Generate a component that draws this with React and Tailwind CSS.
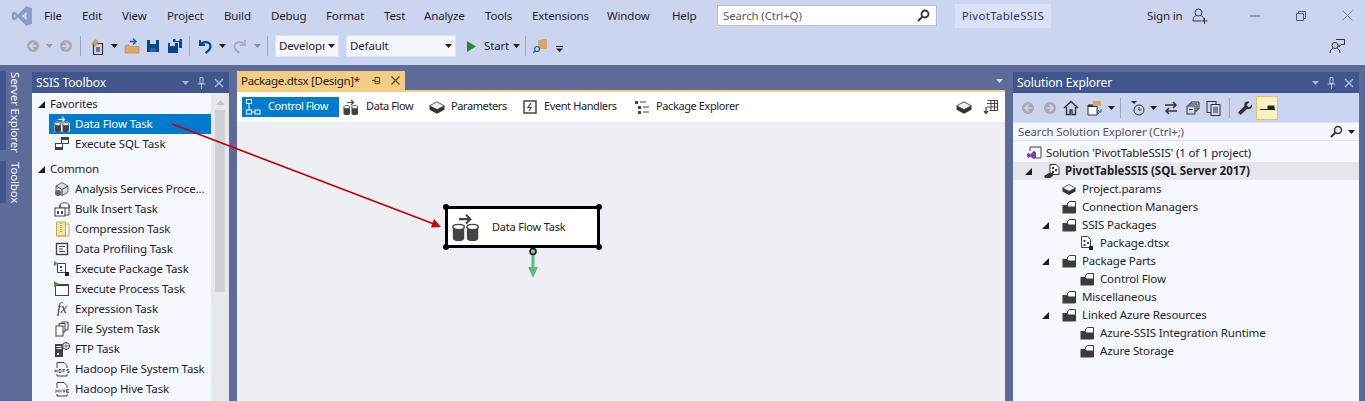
import React from "react";

const D = "#424242";
const Svg = ({ s = 16, vb = "0 0 16 16", children, className = "" }) => (
  <svg width={s} height={s} viewBox={vb} className={"shrink-0 " + className}>{children}</svg>
);
const Caret = ({ c = "#1e1e1e", o = 1 }) => (
  <svg width="7" height="4" viewBox="0 0 7 4" className="shrink-0" opacity={o}><path d="M0 0h7L3.5 4z" fill={c} /></svg>
);
const Tri = () => (
  <svg width="7" height="7" viewBox="0 0 7 7" className="shrink-0"><path d="M7 0v7H0z" fill="#1e1e1e" /></svg>
);
const Sep = () => <div className="w-px h-5 bg-[#9aa7c9] shrink-0" />;

const Circ = ({ dir }) => (
  <Svg s={14} vb="0 0 14 14">
    <circle cx="7" cy="7" r="6" fill="#a8a9ae" />
    <path d={dir === "l" ? "M7.5 3.5 4 7l3.5 3.5M4 7h6.5" : "M6.5 3.5 10 7l-3.5 3.5M10 7H3.5"} stroke="#d5d9e8" strokeWidth="1.6" fill="none" />
  </Svg>
);
const Cyl = ({ x, y, w = 8, h = 9, c = D }) => (
  <g>
    <path d={`M${x} ${y + 1.5}v${h - 2.5}c0 2 ${w} 2 ${w} 0v-${h - 2.5}z`} fill={c} />
    <ellipse cx={x + w / 2} cy={y + 1.5} rx={w / 2} ry="1.5" fill="#fff" stroke={c} strokeWidth="0.8" />
  </g>
);
const DataFlow = ({ s = 16, c = D, halo = false }) => (
  <Svg s={s} vb="0 0 16 16">
    {halo && <path d="M0 7.500C0 5 7.500 5 7.750 7.500 8 5 16 5 16 7.500V15c0 1.500-8 1.500-8.250 0C7.500 16.500 0 16.500 0 15z" fill="#fff" />}
    <path d="M4 3.500h6M8 1l2.500 2.500L8 6" stroke={halo ? "#fff" : c} strokeWidth="1.200" fill="none" />
    <Cyl x={0.5} y={6.5} w={6.5} c={c} />
    <Cyl x={8.5} y={6.5} w={6.5} c={c} />
  </Svg>
);
const ControlFlow = ({ c = "#fff" }) => (
  <Svg>
    <g fill="none" stroke={c} strokeWidth="1">
      <rect x="1.5" y="0.5" width="5" height="4" />
      <rect x="1.5" y="11" width="5" height="4" />
      <rect x="10" y="11" width="5" height="4" />
      <path d="M4 5v6M7 13h3" />
    </g>
  </Svg>
);
const Box3d = ({ s = 14 }) => (
  <Svg s={s} vb="0 0 14 14">
    <path d="M0.5 6 7 2.500 13.500 6v3.500L7 13 .5 9.500z" fill="#333" />
    <path d="M0.5 6 7 2.500 13.500 6 7 9.200z" fill="#eee" stroke="#333" strokeWidth=".6" />
  </Svg>
);
const Folder = () => (
  <Svg s={14} vb="0 0 14 14">
    <path d="M5.500 5V3L7.500 1.500h6V13" fill="#fff" stroke="#3c3c3c" />
    <path d="M.5 5h5l1 1.500h7V13.500H.5z" fill="#3c3c3c" />
  </Svg>
);
const DtsxIcon = () => (
  <Svg s={14} vb="0 0 14 14">
    <path d="M1.500 .5h6l3 3v8h-9z" fill="#fff" stroke="#444" />
    <path d="M3.500 4h2v2h-2zM3.500 8h2v2h-2zM7 6h2v2H7z" fill="#444" />
    <rect x="9" y="10" width="4" height="4" fill="#222" />
  </Svg>
);

function ToolIcon({ k }) {
  const st = { fill: "none", stroke: D, strokeWidth: 1 };
  switch (k) {
    case "df": return <DataFlow halo />;
    case "sql": return (
      <Svg><g {...st}><rect x="7.500" y="1.500" width="7" height="6" /><rect x="1.500" y="7.500" width="7" height="6" fill="#fff" /></g><path d="M2 11h6v3H2z" fill={D} /><path d="M8 2h6v2H8z" fill={D} /></Svg>
    );
    case "as": return (
      <Svg><path d="M2 5 8 1.500 14 5v6l-6 3.500L2 11z" fill="#ddd" stroke="#666" /><path d="M2 5l6 3.500L14 5M8 8.500v6" {...st} /><circle cx="4" cy="12" r="3" fill="#666" /></Svg>
    );
    case "bulk": return (
      <Svg><path d="M6 4v3h9V4c0-3-9-3-9 0z" fill="#fff" stroke={D} /><path d="M6 4v10h9V4" {...st} /><rect x="1" y="7" width="10" height="8" fill="#fff" stroke={D} /><rect x="3" y="10" width="2" height="3" fill={D} /><rect x="7" y="10" width="2" height="3" fill={D} /></Svg>
    );
    case "comp": return (
      <Svg><rect x="2.500" y="1" width="9" height="14" fill="#f4e2a6" stroke="#d9a54a" /><path d="M11.500 3H15v12H4" fill="none" stroke="#d9a54a" /><path d="M7 2v10" stroke="#8a7a3a" strokeDasharray="1 1" /></Svg>
    );
    case "prof": return (
      <Svg><rect x="2.500" y="2.500" width="11" height="11" fill="#fff" stroke={D} strokeWidth="1.400" /><path d="M5 5.500h6M5 8h4M5 10.500h6" stroke={D} /></Svg>
    );
    case "pkg": return (
      <Svg><path d="M3.500 2.500h8v9h-8z" fill="#fff" stroke={D} /><path d="M0 0v5l4-2.500z" fill="#3d9a3d" /><path d="M6 5h2v2H6zM6 9h2v1H6z" fill={D} /><rect x="11" y="11" width="4" height="4" fill="#222" /></Svg>
    );
    case "proc": return (
      <Svg><rect x="1.500" y="3.500" width="13" height="11" fill="#fff" stroke={D} /><path d="M1 3h14v2H1z" fill={D} /><path d="M0 0v6l5-3z" fill="#3d9a3d" /></Svg>
    );
    case "fx": return <span className="w-4 text-center text-[14px] leading-none italic text-[#333] shrink-0 [font-family:'Liberation_Serif',serif]">fx</span>;
    case "fs": return (
      <Svg><rect x="2" y="5" width="7" height="10" fill="#fff" stroke={D} /><path d="M5 5V2.500h6V11H9M8 2.500V1h6v8h-3" {...st} /></Svg>
    );
    case "ftp": return (
      <Svg><rect x="1" y="3" width="8" height="13" fill={D} /><path d="M2.500 5.500h5M2.500 7.500h5" stroke="#fff" /><rect x="3" y="12" width="2" height="2" fill="#fff" /><circle cx="12" cy="5" r="3.500" fill="#fff" stroke={D} /><path d="M8.500 5h7M12 1.500v7" stroke={D} strokeWidth=".7" /></Svg>
    );
    case "hdfs": return (
      <Svg><path d="M3 7V1.500h7l3 3V7M3 13v2h10v-2" {...st} /><path d="M0 8h16v4.500H0z" fill="#f6f8ff" /><path d="M1 8.500v3M3 8.500v3M1 10h2M5 8.500v3h2v-3zM9 8.500v3M9 8.500h2M9 10h2M15 8.500h-2v1.500h2v1.500h-2" stroke={D} strokeWidth=".8" fill="none" /></Svg>
    );
    case "hive": return (
      <Svg><path d="M3 7V1.500h7l3 3V7M3 13v2h10v-2" {...st} /><path d="M2 8.500v3M5 8.500v3M2 10h3M7 8.500v3M9 8.500l1 3 1-3M15 8.500h-2.500v3H15M12.500 10H15" stroke={D} strokeWidth=".8" fill="none" /></Svg>
    );
    default: return null;
  }
}

const menu = [["File", 38], ["Edit", 40], ["View", 45], ["Project", 57], ["Build", 47], ["Debug", 55], ["Format", 58], ["Test", 40], ["Analyze", 61], ["Tools", 47], ["Extensions", 75], ["Window", 65], ["Help", 45]];

const favorites = [["df", "Data Flow Task", true], ["sql", "Execute SQL Task"]];
const common = [
  ["as", "Analysis Services Proce..."], ["bulk", "Bulk Insert Task"], ["comp", "Compression Task"], ["prof", "Data Profiling Task"],
  ["pkg", "Execute Package Task"], ["proc", "Execute Process Task"], ["fx", "Expression Task"], ["fs", "File System Task"],
  ["ftp", "FTP Task"], ["hdfs", "Hadoop File System Task"], ["hive", "Hadoop Hive Task"],
];

const tree = [
  { l: 1, t: 0, n: "Project.params", i: "box" },
  { l: 1, t: 0, n: "Connection Managers" },
  { l: 1, t: 1, n: "SSIS Packages" },
  { l: 2, t: 0, n: "Package.dtsx", i: "dtsx" },
  { l: 1, t: 1, n: "Package Parts" },
  { l: 2, t: 0, n: "Control Flow" },
  { l: 1, t: 0, n: "Miscellaneous" },
  { l: 1, t: 1, n: "Linked Azure Resources" },
  { l: 2, t: 0, n: "Azure-SSIS Integration Runtime" },
  { l: 2, t: 0, n: "Azure Storage" },
];

const PaneTitle = ({ title }) => (
  <div className="h-[21px] bg-[#40568d] flex items-center pl-[4px] pr-[3px] text-white shrink-0">
    <span className="flex-1 text-[12px] leading-none tracking-[-0.1px] pt-[1px]">{title}</span>
    <Caret c="#a9b5d6" />
    <svg width="9" height="12" viewBox="0 0 9 12" className="ml-[8px]"><path d="M3 .5h3v6H3zM.5 7h8M4.500 7v5" stroke="#b9c4e0" fill="none" /></svg>
    <svg width="10" height="10" viewBox="0 0 10 10" className="ml-[8px] mr-[2px]"><path d="M1 1l8 8M9 1 1 9" stroke="#b9c4e0" strokeWidth="1.300" /></svg>
  </div>
);

const VTab = ({ children, className }) => (
  <div className={"bg-[#40568d] w-[6px] shrink-0 relative " + className}>
    <span className="absolute left-[6px] top-0 w-[18px] h-full bg-[#5d6b99] text-[#f0f3ff] leading-[18px] whitespace-nowrap [writing-mode:vertical-rl] pt-[1px]">{children}</span>
  </div>
);

export default function App() {
  return (
    <div className="w-[1365px] h-[401px] overflow-hidden relative flex flex-col bg-[#5d6b99] text-[11.5px] tracking-[-0.15px] text-[#1e1e1e] [font-family:'Noto_Sans',sans-serif]">
      {/* Title bar */}
      <div className="h-[33px] bg-[#ccd5f0] flex items-center shrink-0 pb-[2px]">
        <div className="w-[44px] pl-[12px] shrink-0">
          <svg width="20" height="20" viewBox="0 0 20 20"><path d="M14.500 0 20 2.300v15.400L14.500 20 6 11.500l-3.800 3L0 13.300V6.700l2.200-1.200 3.800 3zm0 5.800L9.800 10l4.700 4.200zM2.200 8v4L4 10z" fill="#8c9ac4" /></svg>
        </div>
        {menu.map(([m, w]) => (
          <span key={m} className="shrink-0" style={{ width: w }}>{m}</span>
        ))}
        <div className="w-[220px] h-[21px] bg-white border border-[#b4bdd8] shrink-0 flex items-center pl-[5px] pr-[6px] text-[#5a5a5a]">
          <span className="flex-1">Search (Ctrl+Q)</span>
          <svg width="13" height="13" viewBox="0 0 13 13"><circle cx="8" cy="5" r="3.500" fill="none" stroke="#333" strokeWidth="1.800" /><path d="M5.500 7.500 1 12" stroke="#333" strokeWidth="2" /></svg>
        </div>
        <div className="ml-[18px] w-[96px] h-[24px] bg-[#dbe1f7] flex items-center justify-center text-[#2a3a6b] tracking-[0.3px] shrink-0">PivotTableSSIS</div>
        <span className="ml-[96px] w-[37px] shrink-0">Sign in</span>
        <svg width="16" height="16" viewBox="0 0 16 16" className="ml-[8px] shrink-0"><circle cx="6.500" cy="4.500" r="3.500" fill="none" stroke="#333" /><path d="M1 13c0-4 2-5 3.500-5.500M12 13c0-4-2-5-3.500-5.500M1 13h8" fill="none" stroke="#333" /><path d="M12.500 10v6M9.500 13h6" stroke="#333" /></svg>
        <svg width="10" height="2" viewBox="0 0 10 2" className="ml-[42px] shrink-0"><path d="M0 1h10" stroke="#4c5a85" /></svg>
        <svg width="10" height="10" viewBox="0 0 10 10" className="ml-[36px] shrink-0"><path d="M.5 2.500h7v7h-7zM2.500 2.500v-2h7v7h-2" fill="none" stroke="#4c5a85" /></svg>
        <svg width="11" height="11" viewBox="0 0 11 11" className="ml-[36px] shrink-0"><path d="M.5.5l10 10M10.500.5l-10 10" stroke="#7384ad" /></svg>
      </div>

      {/* Tool bar */}
      <div className="h-[32px] bg-[#ccd5f0] flex items-center shrink-0 pl-[12px] pb-[6px]">
        <div className="w-[5px] h-[18px] shrink-0 [background-image:radial-gradient(#7a86a8_0.6px,transparent_0.7px)] [background-size:2px_2px]" />
        <div className="w-[3px]" />
        <div className="ml-[6px] flex items-center">
          <Circ dir="l" /><div className="w-[6px]" /><Caret c="#9a9ca3" /><div className="w-[6px]" /><Circ dir="r" />
        </div>
        <div className="w-[7px]" /><Sep /><div className="w-[7px]" />
        <Svg s={18} vb="0 0 18 18"><path d="M5.500 6.500h9v11h-9z" fill="none" stroke="#333" strokeWidth="1.200" /><path d="M6 3.500 8 2l1 2 2-.5L9.500 6 11 8 8.500 7.500 7 10 6 7.500 3 7l2-2z" fill="#d29a45" /><path d="M8 10h4v5H8z" fill="#777" /></Svg>
        <div className="w-[5px]" /><Caret />
        <div className="w-[6px]" />
        <Svg s={16}><path d="M1 7h4l1 1.500h9V15H1z" fill="#dcaa64" stroke="#b8853a" strokeWidth=".6" /><path d="M6 3.500h5M9 .5l3 3-3 3" fill="none" stroke="#1c5fa8" strokeWidth="1.400" /></Svg>
        <div className="w-[6px]" />
        <Svg s={14} vb="0 0 14 14"><path d="M1 1h12v12H1z" fill="#00488e" /><path d="M4 1h6v4H4z" fill="#ccd5f0" /><path d="M4 9h6v4H4z" fill="#fff" opacity=".15" /></Svg>
        <div className="w-[7px]" />
        <Svg s={16}><path d="M1 5h10v10H1z" fill="#00488e" /><path d="M3 5h5v3H3z" fill="#ccd5f0" /><path d="M6 1h9v9h-3V4H6z" fill="#00488e" /><path d="M8.500 1h4v2h-4z" fill="#ccd5f0" /></Svg>
        <div className="w-[6px]" /><Sep /><div className="w-[7px]" />
        <Svg s={16}><path d="M3 2v5h5" fill="none" stroke="#00488e" strokeWidth="2" /><path d="M3.500 6.500C6 3 13 3 13.500 8c.3 3-2 5-5 7" fill="none" stroke="#00488e" strokeWidth="2.200" /></Svg>
        <div className="w-[6px]" /><Caret />
        <div className="w-[6px]" />
        <Svg s={16}><path d="M13 2v5H8" fill="none" stroke="#a5abbb" strokeWidth="1.600" /><path d="M12.500 6.500C10 3 3 3 2.500 8c-.3 3 2 5 5 7" fill="none" stroke="#a5abbb" strokeWidth="1.800" /></Svg>
        <div className="w-[6px]" /><Caret c="#8e919a" />
        <div className="w-[6px]" /><Sep /><div className="w-[7px]" />
        <div className="w-[64px] h-[22px] bg-[#f5f6ff] border border-[#dde3f6] flex items-center pl-[3px] pr-[3px] shrink-0 overflow-hidden">
          <span className="w-[47px] overflow-hidden whitespace-nowrap">Development</span><div className="w-[3px]" /><Caret />
        </div>
        <div className="ml-[7px] w-[110px] h-[22px] bg-[#f5f6ff] border border-[#dde3f6] flex items-center pl-[3px] pr-[3px] shrink-0">
          <span className="flex-1">Default</span><Caret />
        </div>
        <svg width="9" height="11" viewBox="0 0 9 11" className="ml-[11px] shrink-0"><path d="M0 0l9 5.500L0 11z" fill="#2a8a2a" /></svg>
        <span className="ml-[8px] w-[24px] shrink-0">Start</span>
        <div className="ml-[5px]"><Caret /></div>
        <div className="w-[5px]" /><Sep /><div className="w-[7px]" />
        <Svg s={16}><path d="M5 2h3l1-1h5v10H5z" fill="#d8a768" /><circle cx="4" cy="11" r="2.500" fill="#ccd5f0" stroke="#1c5fa8" strokeWidth="1.200" /><path d="M2.300 12.700 0 15" stroke="#1c5fa8" strokeWidth="1.400" /></Svg>
        <svg width="7" height="6" viewBox="0 0 7 6" className="ml-[7px] mt-[6px] shrink-0"><path d="M0 .5h7" stroke="#1e1e1e" /><path d="M0 2.500h7L3.500 6z" fill="#1e1e1e" /></svg>
        <div className="flex-1" />
        <svg width="16" height="16" viewBox="0 0 16 16" className="mr-[20px] shrink-0"><circle cx="6" cy="7.500" r="3" fill="none" stroke="#333" /><path d="M1 15c0-3 2-4.500 3-4.500M11 15c0-3-2-4.500-3-4.500" fill="none" stroke="#333" /><path d="M7 1.500h8.500v5H12L10 9V6.500" fill="none" stroke="#333" /></svg>
      </div>

      {/* Main */}
      <div className="flex-1 flex min-h-0 pt-[6px]">
        {/* Left rail */}
        <div className="w-[32px] shrink-0 flex flex-col">
          <VTab className="h-[79px]">Server Explorer</VTab>
          <div className="h-[11px]" />
          <VTab className="h-[42px]">Toolbox</VTab>
        </div>

        {/* Toolbox pane */}
        <div className="w-[197px] shrink-0 flex flex-col mt-[1px]">
          <PaneTitle title="SSIS Toolbox" />
          <div className="flex-1 flex bg-[#f6f8ff] min-h-0">
            <div className="flex-1 pl-[6px] pt-[1px] overflow-hidden">
              <div className="h-[20px] flex items-center">
                <Tri /><span className="ml-[5px]">Favorites</span>
              </div>
              {favorites.map(([k, n, sel]) => (
                <div key={n} className={"h-[20px] flex items-center ml-[11px] pl-[5px] " + (sel ? "bg-[#007acc] text-white" : "")}>
                  <ToolIcon k={k} /><span className="ml-[5px]">{n}</span>
                </div>
              ))}
              <div className="h-[5px]" />
              <div className="h-[20px] flex items-center">
                <Tri /><span className="ml-[5px]">Common</span>
              </div>
              {common.map(([k, n]) => (
                <div key={n} className="h-[20px] flex items-center ml-[11px] pl-[5px] whitespace-nowrap">
                  <ToolIcon k={k} /><span className="ml-[5px]">{n}</span>
                </div>
              ))}
            </div>
            <div className="w-[18px] shrink-0 bg-[#e8e8ec] flex flex-col items-center">
              <svg width="9" height="5" viewBox="0 0 9 5" className="mt-[7px]"><path d="M4.500 0 9 5H0z" fill="#c2c3c9" /></svg>
              <div className="mt-[5px] w-[10px] h-[182px] bg-[#d0d1d7]" />
            </div>
          </div>
        </div>

        <div className="w-[8px] shrink-0" />

        {/* Document */}
        <div className="w-[768px] shrink-0 flex flex-col">
          <div className="h-[19px] flex items-stretch shrink-0 relative">
            <div className="w-[168px] bg-[#f5cc84] flex items-center pl-[4px] tracking-[-0.3px]">
              <span className="flex-1 whitespace-nowrap">Package.dtsx [Design]*</span>
              <svg width="9" height="9" viewBox="0 0 9 9" className="mr-[10px]"><path d="M0 4.500h3M3 1.500v6h4.500v-6zM3 5.500h4.500" stroke="#5a4a20" fill="none" /></svg>
              <svg width="9" height="9" viewBox="0 0 9 9" className="mr-[5px]"><path d="M.5.5l8 8M8.500.5l-8 8" stroke="#5a4a20" strokeWidth="1.300" /></svg>
            </div>
            <div className="flex-1 flex items-center justify-end pr-[2px]"><Caret c="#d5dcf2" /></div>
          </div>
          <div className="h-[2px] bg-[#f5cc84] shrink-0" />
          <div className="h-[30px] bg-white flex items-center shrink-0 pl-[5px] pr-[6px] text-[11px] tracking-[-0.4px]">
            <div className="w-[97px] h-[20px] bg-[#007acc] text-white flex items-center pl-[3px] mr-[4px] shrink-0 whitespace-nowrap">
              <ControlFlow /><span className="ml-[7px] pb-[2px]">Control Flow</span>
            </div>
            <DataFlow /><span className="ml-[7px] w-[63px] shrink-0 pb-[2px]">Data Flow</span>
            <Box3d s={16} /><span className="ml-[6px] w-[72px] shrink-0 pb-[2px]">Parameters</span>
            <Svg s={14} vb="0 0 14 14"><rect x="1" y="1" width="12" height="12" fill="#fff" stroke="#444" strokeWidth="1.500" /><path d="M8 3 5 7.500h3L6 11" fill="none" stroke="#444" strokeWidth="1.200" /></Svg>
            <span className="ml-[7px] w-[90px] shrink-0 pb-[2px]">Event Handlers</span>
            <Svg s={16}><path d="M1 2h3v3H1zM4 7h3v3H4zM4 12h3v3H4z" fill="#444" /><path d="M6 3h6M9 8h6M9 13h6" stroke="#444" /></Svg>
            <span className="ml-[6px] pb-[2px]">Package Explorer</span>
            <div className="flex-1" />
            <Box3d s={16} />
            <Svg s={16} className="ml-[11px]"><path d="M4.500 1.500h10v10h-8" fill="none" stroke="#444" /><path d="M4 4.500h11M4 8h11M8 1.500v10M11.500 1.500v10" stroke="#444" /><path d="M3 8v6M1 12l2 2.500L5 12" fill="none" stroke="#444" strokeWidth="1.300" /></Svg>
          </div>
          <div className="flex-1 bg-[#eeeff3] relative">
            {/* Task on the canvas */}
            <div className="absolute left-[208px] top-[84px] w-[155px] h-[42px] bg-white border-[3px] border-black rounded-[3px] flex items-center pl-[4px] text-[11px] tracking-[-0.2px]">
              <DataFlow s={28} c="#444" />
              <span className="ml-[12px] text-[#222]">Data Flow Task</span>
            </div>
            {[[206, 82], [359, 82], [206, 122], [359, 122]].map(([x, y]) => (
              <span key={x + "-" + y} className="absolute w-[6px] h-[6px] rounded-full bg-black" style={{ left: x, top: y }} />
            ))}
            <svg width="16" height="34" viewBox="0 0 16 34" className="absolute left-[288px] top-[125px]">
              <path d="M8 7v14" stroke="#5dbb7e" strokeWidth="3" />
              <path d="M3 20h10l-5 11z" fill="#5dbb7e" />
              <circle cx="8" cy="4.500" r="3" fill="#7fc596" stroke="#111" strokeWidth="1.500" />
            </svg>
          </div>
        </div>

        <div className="w-[8px] shrink-0" />

        {/* Solution explorer */}
        <div className="w-[346px] shrink-0 flex flex-col mt-[1px]">
          <PaneTitle title="Solution Explorer" />
          <div className="h-[29px] bg-[#ccd5f0] flex items-center pl-[8px] shrink-0">
            <Circ dir="l" /><div className="w-[8px]" /><Circ dir="r" /><div className="w-[6px]" />
            <Svg><path d="M1 8 8 1.500 15 8M3.500 7v7.500h3.500V10h2v4.500h3.500V7" fill="none" stroke="#333" strokeWidth="1.400" /></Svg>
            <div className="w-[8px]" />
            <Svg><path d="M1 5h9v10H1z" fill="#fff" stroke="#333" /><path d="M1 5h9v2H1z" fill="#333" /><path d="M6 1h8v5H6z" fill="#d8a768" /><path d="M14 9v3h-3M12 10l-2 2 2 2" fill="none" stroke="#1c5fa8" /></Svg>
            <div className="w-[5px]" /><Caret />
            <div className="w-[5px]" /><Sep /><div className="w-[9px]" />
            <Svg><circle cx="9" cy="10" r="5" fill="none" stroke="#333" /><path d="M9 7v3h2.500" fill="none" stroke="#333" /><path d="M1 1h6L4 4z" fill="#333" /></Svg>
            <div className="w-[4px]" /><Caret />
            <div className="w-[6px]" />
            <Svg><path d="M2 5h11M10 2l3 3-3 3M14 11H3M6 8l-3 3 3 3" fill="none" stroke="#333" strokeWidth="1.500" /></Svg>
            <div className="w-[7px]" />
            <Svg s={14} vb="0 0 14 14"><rect x="1" y="5" width="8" height="8" fill="none" stroke="#333" /><path d="M3 5V3h8v7H9M5 3V1h8v7h-2M3 8.500h4" fill="none" stroke="#333" /></Svg>
            <div className="w-[6px]" />
            <Svg><rect x="1" y="1.500" width="9" height="11" fill="none" stroke="#333" /><rect x="5" y="4.500" width="9" height="11" fill="#ccd5f0" stroke="#333" /><path d="M7 8h5M7 10h5M7 12h5" stroke="#333" /></Svg>
            <div className="w-[7px]" /><Sep /><div className="w-[7px]" />
            <Svg><path d="M15 4.500 12 7.500 9.500 5 12.500 2c-3-1.500-6 1-5 4L1 12.500 3.500 15 10 9c3 1 6-1.500 5-4.500z" fill="#333" /></Svg>
            <div className="w-[3px]" />
            <div className="w-[22px] h-[24px] bg-[#ffefc4] border border-[#e5c365] flex items-center justify-center shrink-0">
              <svg width="15" height="6" viewBox="0 0 15 6"><path d="M0 4.500h15M8 1h6v3H8z" stroke="#222" fill="#222" /></svg>
            </div>
          </div>
          <div className="h-[19px] bg-[#f5f6ff] border-y border-[#dde3f6] flex items-center pl-[5px] pr-[3px] text-[#555] shrink-0">
            <span className="flex-1">Search Solution Explorer (Ctrl+;)</span>
            <svg width="13" height="13" viewBox="0 0 13 13"><circle cx="8" cy="5" r="3.500" fill="none" stroke="#333" strokeWidth="1.500" /><path d="M5.500 7.500 1 12" stroke="#333" strokeWidth="2" /></svg>
            <div className="ml-[5px] mr-[1px]"><Caret /></div>
          </div>
          <div className="flex-1 bg-[#f6f8ff] pt-[3px] overflow-hidden">
            <div className="h-[18px] flex items-center pl-[14px]">
              <svg width="15" height="14" viewBox="0 0 15 14" className="shrink-0"><path d="M3 1h11v11H8" fill="none" stroke="#444" /><path d="M3 1v4" stroke="#444" /><path d="M6.500 5 9 6v6l-2.500 1L3.500 10.500 2 12 0 11V8l2-1 1.500 1.500z" fill="#7a3fb8" /></svg>
              <span className="ml-[4px]">Solution 'PivotTableSSIS' (1 of 1 project)</span>
            </div>
            <div className="h-[18px] flex items-center bg-[#e6e7ec] pl-[5px] font-bold tracking-normal">
              <div className="w-[7px]" /><Tri /><div className="w-[12px]" />
              <Svg><path d="M6 1.500h6l3 3v7H6z" fill="#fff" stroke="#333" /><path d="M8 4h2v2H8zM8 8h2v2H8zM11 6h2v2h-2z" fill="#333" /><path d="M0 13l5-3h4v3l-3 2H1z" fill="#333" /></Svg>
              <span className="ml-[5px]">PivotTableSSIS (SQL Server 2017)</span>
            </div>
            {tree.map((r) => (
              <div key={r.n} className="h-[18px] flex items-center whitespace-nowrap">
                <div className="w-[49px] flex shrink-0 pl-[29px]">{r.t ? <Tri /> : null}</div>
                {r.l === 2 && <div className="w-[18px] shrink-0" />}
                {r.i === "box" ? <Box3d s={14} /> : r.i === "dtsx" ? <DtsxIcon /> : <Folder />}
                <span className="ml-[6px]">{r.n}</span>
              </div>
            ))}
          </div>
        </div>
      </div>

      {/* Connector dragged from toolbox to canvas */}
      <svg width="1365" height="401" className="absolute inset-0 pointer-events-none">
        <path d="M172 124 434 224" stroke="#c00000" strokeWidth="1.600" />
        <path d="M441 227 431 227.500 434 219z" fill="#d00000" />
      </svg>
    </div>
  );
}
